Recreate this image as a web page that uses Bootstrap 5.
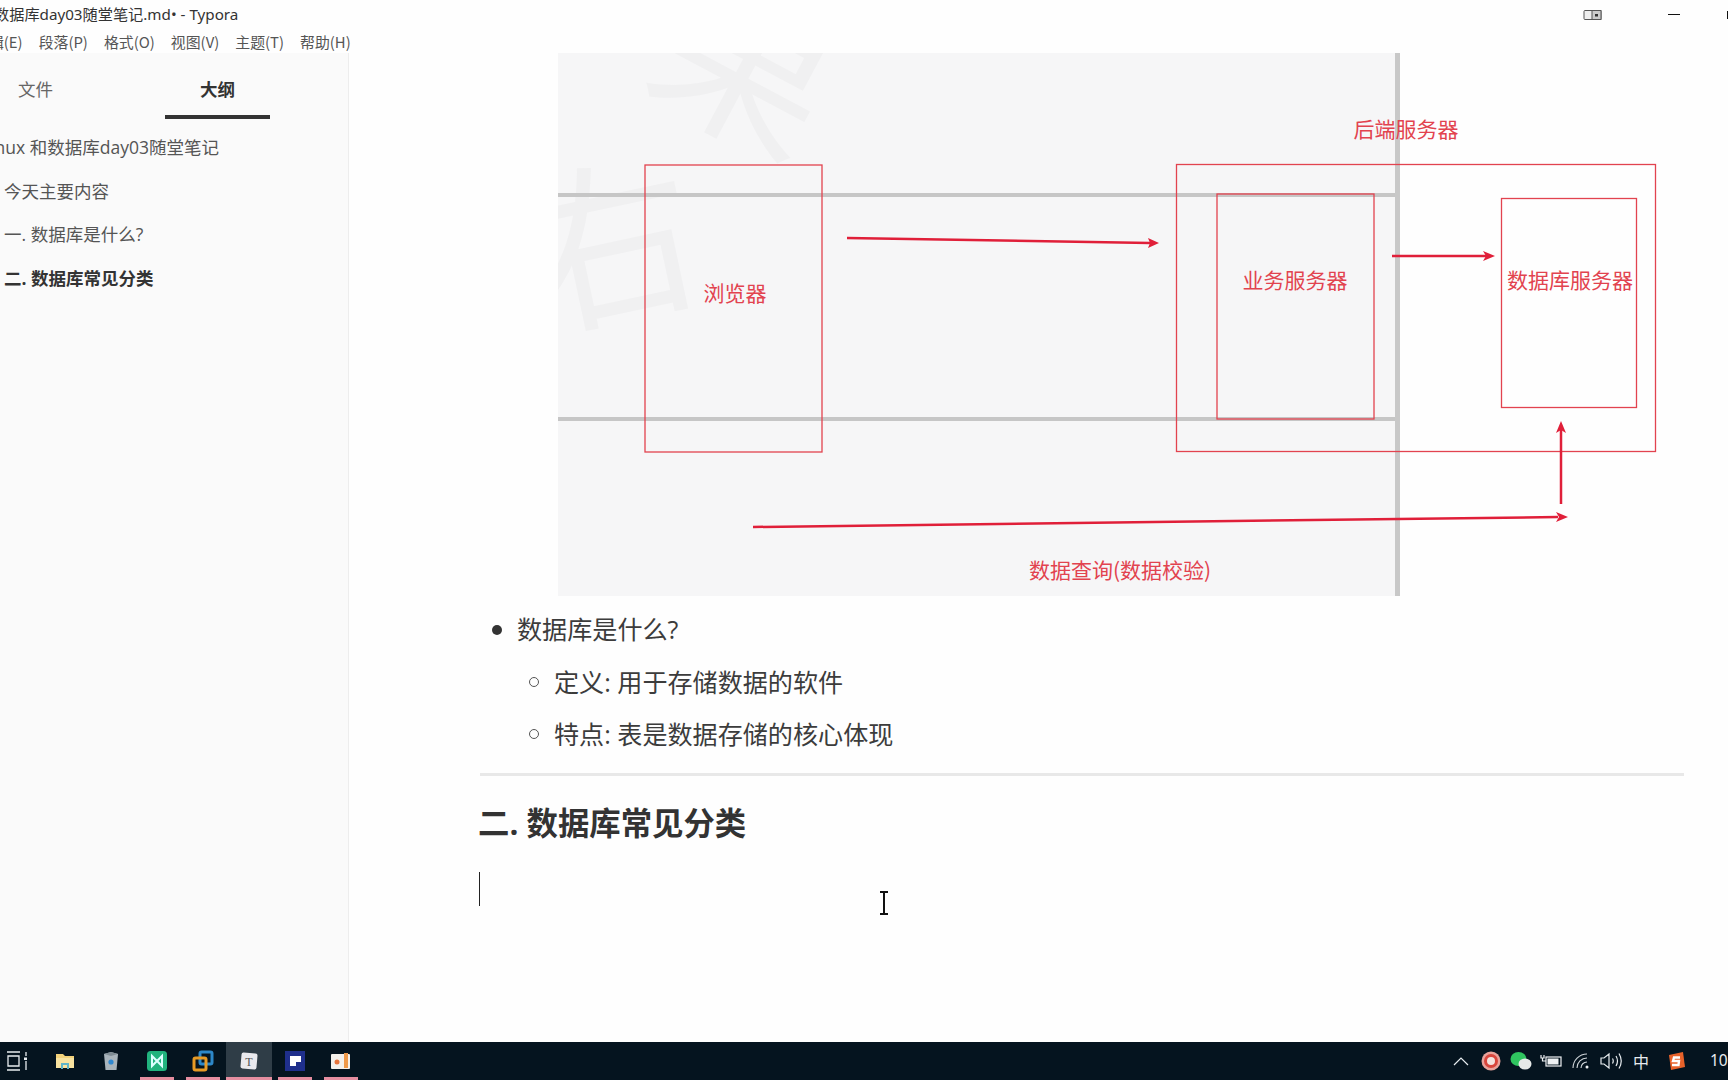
<!DOCTYPE html>
<html lang="zh-CN">
  <head>
    <meta charset="UTF-8" />
    <meta name="viewport" content="width=device-width, initial-scale=1" />
    <title>数据库day03随堂笔记.md - Typora</title>
    <link href="https://cdn.jsdelivr.net/npm/bootstrap@5.3.3/dist/css/bootstrap.min.css" rel="stylesheet" />
    <style>
      html, body { height: 100%; overflow: hidden; }
      body {
        background: #fefefe;
        color: #333;
        font-family: "Open Sans", "Noto Sans CJK SC", sans-serif;
      }
      .ty-window { height: 1080px; }
      .ty-title { height: 28px; padding-top: 1px; font-size: 15.2px; color: #333; font-family: "Noto Sans", "Noto Sans CJK SC", sans-serif; }
      .ty-title-text { margin-left: -6px; white-space: nowrap; }
      .ty-tablet { margin-right: 65px; }
      .ty-min { width: 12px; height: 1px; background: #111; margin-right: 47px; }
      .ty-max { width: 1px; height: 8px; background: #111; }
      .ty-menu { height: 27px; padding-top: 1px; font-size: 14.9px; color: #555; font-family: "Noto Sans CJK SC", sans-serif; gap: 16px; margin-left: -26px; white-space: nowrap; }
      .ty-side { width: 349px; background: #fafafa; border-right: 1px solid #ededed; flex: none; font-size: 17.5px; color: #555; overflow: hidden; margin-top: -2px; padding-top: 2px; }
      .ty-tabs { height: 65px; position: relative; }
      .ty-tab { width: 105px; text-align: center; padding-top: 21px; height: 64px; line-height: 27px; }
      .ty-tab-files { margin-left: -17px; color: #666; }
      .ty-tab-outline { margin-left: 77px; font-weight: 700; color: #333; border-bottom: 4px solid #333; }
      .ty-outline { padding: 6px 0 0 4px; margin: 0; }
      .ty-outline li { height: 43.7px; line-height: 43.7px; white-space: nowrap; }
      .ty-outline .ty-root { margin-left: -23px; }
      .ty-outline .ty-on { font-weight: 700; color: #333; }
      .ty-doc { position: relative; min-width: 0; overflow: hidden; margin-top: -2px; }
      .ty-figure { display: block; margin-left: 209px; }
      .ty-figure text { font-family: "Noto Sans CJK SC", sans-serif; font-size: 21px; fill: #e2434f; text-anchor: middle; }
      .ty-figure .ty-wm { font-size: 175px; fill: #f0f0f1; font-weight: 400; }
      .ty-list { margin: 7px 0 0 168px; padding: 0; font-size: 25.1px; list-style: none; color: #3c3c3c; }
      .ty-list li { line-height: 52.6px; position: relative; }
      .ty-list ul { padding: 0 0 0 37px; list-style: none; }
      .ty-list li::before { content: ""; position: absolute; left: -25px; top: 22px; width: 10px; height: 10px; border-radius: 50%; background: #333; }
      .ty-list ul li::before { left: -25px; top: 21px; background: transparent; border: 1.5px solid #555; }
      .ty-rule { height: 3px; background: #e8e8e8; border: 0; opacity: 1; margin: 12px 44px 0 131px; }
      .ty-h2 { font-size: 31.4px; font-weight: 700; color: #333; margin: 25px 0 0 129px; line-height: 44px; }
      .ty-caret { width: 1px; height: 34px; background: #222; margin: 27px 0 0 130px; }
      .ty-ibeam { position: absolute; left: 530px; top: 838px; }
      .ty-taskbar { height: 38px; background: #05141f; flex: none; color: #fff; }
      .ty-cell { width: 46px; height: 38px; position: relative; flex: none; }
      .ty-cell-first { width: 42px; padding-left: 6px; }
      .ty-cell-on { background: #2f3d47; }
      .ty-open::after { content: ""; position: absolute; left: 6px; right: 6px; bottom: 0; height: 3px; background: #e58ea0; }
      .ty-cell-on::after { left: 0; right: 0; }
      .ty-tray { width: 30px; flex: none; }
      .ty-tray-cap { width: 30px; flex: none; font-family: "Noto Sans CJK SC", sans-serif; font-size: 16px; color: #e6eaee; text-align: center; }
      .ty-tray-first { margin-left: auto; }
      .ty-sogou { width: 40px; flex: none; }
      .ty-clock { width: 32px; flex: none; font-size: 15.5px; color: #e8ecef; padding-left: 14px; white-space: nowrap; overflow: hidden; font-family: "Noto Sans", sans-serif; }
      .ty-typora-t { font-family: "Liberation Serif", serif; font-size: 12px; fill: #555; text-anchor: middle; }
    </style>
  </head>
  <body>
    <div class="ty-window d-flex flex-column">
      <!-- title bar -->
      <div class="ty-title d-flex align-items-center">
        <span class="ty-title-text flex-grow-1">数据库day03随堂笔记.md• - Typora</span>
        <svg class="ty-tablet" width="20" height="12" viewBox="0 0 20 12" fill="none" stroke="#555">
          <rect x="1" y="1.5" width="17" height="9" rx="1" fill="#eee" />
          <rect x="9" y="1.5" width="9" height="9" fill="#ccc" />
          <rect x="12" y="5" width="3" height="2.5" fill="#333" stroke="none" />
        </svg>
        <span class="ty-min"></span>
        <span class="ty-max"></span>
      </div>

      <!-- menu -->
      <div class="ty-menu d-flex align-items-center">
        <span>编辑(E)</span>
        <span>段落(P)</span>
        <span>格式(O)</span>
        <span>视图(V)</span>
        <span>主题(T)</span>
        <span>帮助(H)</span>
      </div>

      <div class="d-flex flex-grow-1" style="min-height: 0">
        <!-- sidebar -->
        <aside class="ty-side">
          <div class="ty-tabs d-flex">
            <div class="ty-tab ty-tab-files">文件</div>
            <div class="ty-tab ty-tab-outline">大纲</div>
          </div>
          <ul class="ty-outline list-unstyled">
            <li class="ty-root">Linux 和数据库day03随堂笔记</li>
            <li>今天主要内容</li>
            <li>一. 数据库是什么?</li>
            <li class="ty-on">二. 数据库常见分类</li>
          </ul>
        </aside>

        <!-- document -->
        <main class="ty-doc flex-grow-1">
          <svg class="ty-figure" width="1128" height="543" viewBox="558 53 1128 543">
            <rect x="558" y="53" width="842" height="543" fill="#f6f6f7" />
            <clipPath id="figClip"><rect x="558" y="53" width="838" height="543" /></clipPath>
            <g clip-path="url(#figClip)">
              <text class="ty-wm" x="610" y="310" transform="rotate(-12 610 250)">右</text>
              <text class="ty-wm" x="745" y="130" transform="rotate(28 745 70)">果</text>
            </g>
            <path d="M558 195H1396M558 419H1396" stroke="#c6c6c6" stroke-width="4" />
            <path d="M1397.5 53V596" stroke="#c8c8c8" stroke-width="5" />
            <g fill="none" stroke="#e2434f" stroke-width="1.3">
              <rect x="645" y="165" width="177" height="287" />
              <rect x="1176.5" y="164.5" width="479" height="287" />
              <rect x="1217" y="194" width="157" height="225" />
              <rect x="1501.5" y="198.5" width="135" height="209" />
            </g>
            <text x="735" y="301">浏览器</text>
            <text x="1406" y="137">后端服务器</text>
            <text x="1295" y="288">业务服务器</text>
            <text x="1570" y="288">数据库服务器</text>
            <text x="1120" y="578">数据查询(数据校验)</text>
            <g stroke="#e01f39" stroke-width="2.5" fill="none">
              <path d="M847 238L1150 243" />
              <path d="M1392 256H1486" />
              <path d="M753 527L1558 517" />
              <path d="M1561 504V429" />
            </g>
            <g fill="#e01f39">
              <path d="M1159 243L1148 238L1150 243L1148 248Z" />
              <path d="M1495 256L1483 251L1486 256L1483 261Z" />
              <path d="M1568 517L1556 512L1559 517L1556 522Z" />
              <path d="M1561 421L1556 433L1561 430L1566 433Z" />
            </g>
          </svg>

          <ul class="ty-list">
            <li>数据库是什么?
              <ul>
                <li>定义: 用于存储数据的软件</li>
                <li>特点: 表是数据存储的核心体现</li>
              </ul>
            </li>
          </ul>
          <hr class="ty-rule" />
          <h2 class="ty-h2">二. 数据库常见分类</h2>
          <div class="ty-caret"></div>

          <svg class="ty-ibeam" width="10" height="24" viewBox="0 0 10 24" fill="none" stroke="#111" stroke-width="2">
            <path d="M1 1H9M1 23H9M5 1V23" />
          </svg>
        </main>
      </div>

      <!-- taskbar -->
      <footer class="ty-taskbar d-flex align-items-center">
        <div class="ty-cell ty-cell-first d-flex align-items-center">
          <svg width="22" height="20" viewBox="0 0 22 20" fill="none" stroke="#e8edf0" stroke-width="1.3">
            <path d="M1 1H14M1 19H14M2 5H13V15H2ZM20 1V5M20 10V19" />
            <rect x="18" y="6.5" width="3" height="2.5" fill="#e8edf0" stroke="none" />
          </svg>
        </div>
        <div class="ty-cell d-flex align-items-center justify-content-center">
          <svg width="20" height="18" viewBox="0 0 20 18">
            <path d="M1 2H8L10 4H19V16H1Z" fill="#f3d27a" />
            <path d="M1 6H19V16H1Z" fill="#f8e3a0" />
            <path d="M6 17V11H14V17H12V13H8V17Z" fill="#5fb5c9" />
          </svg>
        </div>
        <div class="ty-cell d-flex align-items-center justify-content-center">
          <svg width="16" height="20" viewBox="0 0 16 20">
            <path d="M1 3L8 1L15 3L13.5 19H2.5Z" fill="#a9b4bb" />
            <path d="M1 3L8 1L15 3L8 5Z" fill="#7f8b93" />
            <circle cx="8" cy="11" r="2.6" fill="#2f88d0" />
          </svg>
        </div>
        <div class="ty-cell ty-open d-flex align-items-center justify-content-center">
          <svg width="20" height="20" viewBox="0 0 20 20">
            <rect width="20" height="20" rx="3.5" fill="#21b37e" />
            <path d="M5 5V15L10 10L15 15V5L10 10Z" fill="none" stroke="#dff" stroke-width="2" />
          </svg>
        </div>
        <div class="ty-cell ty-open d-flex align-items-center justify-content-center">
          <svg width="22" height="22" viewBox="0 0 22 22" fill="none" stroke-width="3">
            <rect x="8" y="2" width="12" height="12" rx="1.5" stroke="#2d87c8" />
            <rect x="2" y="8" width="12" height="12" rx="1.5" stroke="#e79a25" />
          </svg>
        </div>
        <div class="ty-cell ty-cell-on ty-open d-flex align-items-center justify-content-center">
          <svg width="20" height="20" viewBox="0 0 20 20">
            <rect x="2" y="2" width="16" height="16" rx="2" fill="#e9e9ee" transform="rotate(5 10 10)" />
            <text class="ty-typora-t" x="10" y="14.5">T</text>
          </svg>
        </div>
        <div class="ty-cell ty-open d-flex align-items-center justify-content-center">
          <svg width="20" height="20" viewBox="0 0 20 20">
            <rect width="20" height="20" fill="#1f2f8c" />
            <path d="M5 5H16V11H11V15H5Z" fill="#fff" />
          </svg>
        </div>
        <div class="ty-cell ty-open d-flex align-items-center justify-content-center">
          <svg width="20" height="18" viewBox="0 0 20 18">
            <rect y="2" width="19" height="15" rx="1" fill="#f4f1ec" />
            <circle cx="6" cy="10" r="2.5" fill="#e8743b" />
            <rect x="13" y="1" width="4" height="15" fill="#ef9a4a" />
          </svg>
        </div>

        <!-- tray -->
        <div class="ty-tray ty-tray-first d-flex justify-content-center">
          <svg width="16" height="10" viewBox="0 0 16 10" fill="none" stroke="#e8edf0" stroke-width="1.2"><path d="M1 9L8 2L15 9" /></svg>
        </div>
        <div class="ty-tray d-flex justify-content-center">
          <svg width="20" height="20" viewBox="0 0 20 20">
            <circle cx="10" cy="10" r="9.5" fill="#e8a29b" />
            <circle cx="10" cy="10" r="7" fill="#d8453c" />
            <circle cx="10" cy="10" r="4" fill="#f3e3df" />
          </svg>
        </div>
        <div class="ty-tray d-flex justify-content-center">
          <svg width="22" height="20" viewBox="0 0 22 20">
            <ellipse cx="8.5" cy="8" rx="8" ry="7" fill="#2fc45f" />
            <ellipse cx="15" cy="13" rx="6.5" ry="5.5" fill="#e6e9e8" />
          </svg>
        </div>
        <div class="ty-tray d-flex justify-content-center">
          <svg width="22" height="14" viewBox="0 0 22 14" fill="none" stroke="#eef1f3" stroke-width="1.2">
            <rect x="6" y="3" width="15" height="9" />
            <rect x="7.5" y="4.5" width="11" height="6" fill="#eef1f3" stroke="none" />
            <path d="M1 1V4H4V1M2.5 4V7H6" />
          </svg>
        </div>
        <div class="ty-tray d-flex justify-content-center">
          <svg width="18" height="16" viewBox="0 0 18 16" fill="none" stroke="#cfd5d9" stroke-width="1.1">
            <path d="M1 15A14 14 0 0 1 15 1M5 15A10 10 0 0 1 15 5M9 15A6 6 0 0 1 15 9" />
            <circle cx="15" cy="14" r="1.5" fill="#eef1f3" stroke="none" />
          </svg>
        </div>
        <div class="ty-tray d-flex justify-content-center">
          <svg width="22" height="18" viewBox="0 0 22 18" fill="none" stroke="#e8edf0" stroke-width="1.2">
            <path d="M1 6H4L9 2V16L4 12H1ZM12.5 6.5Q14 9 12.5 11.5M16 4Q19 9 16 14M19 1.5Q23.5 9 19 16.5" />
          </svg>
        </div>
        <div class="ty-tray-cap">中</div>
        <div class="ty-sogou d-flex justify-content-center">
          <svg width="20" height="20" viewBox="0 0 20 20">
            <path d="M3 4L17 1L19 16L5 19Z" fill="#e8622a" />
            <path d="M14 6.5H8L7 10H13L12.5 14H6" fill="none" stroke="#fff" stroke-width="2.4" />
          </svg>
        </div>
        <div class="ty-clock">10</div>
      </footer>
    </div>

    <script src="https://cdn.jsdelivr.net/npm/bootstrap@5.3.3/dist/js/bootstrap.bundle.min.js"></script>
  </body>
</html>
